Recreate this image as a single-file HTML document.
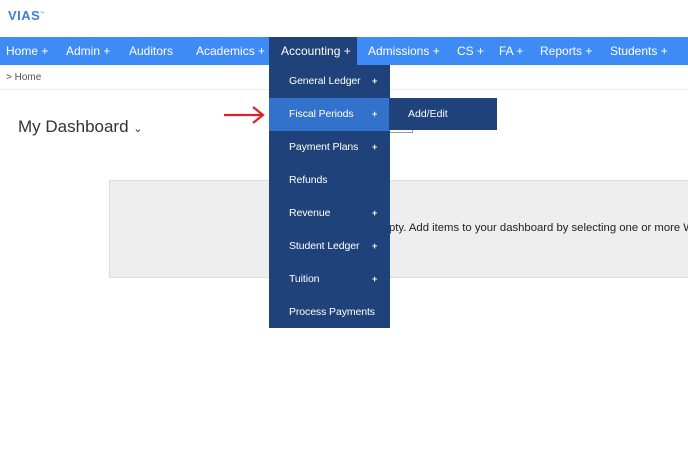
<!DOCTYPE html>
<html><head><style>
*{margin:0;padding:0;box-sizing:border-box}
body{width:688px;height:453px;overflow:hidden;background:#fff;font-family:"Liberation Sans",sans-serif;position:relative}
.a{position:absolute;white-space:nowrap}
.nav{position:absolute;left:0;top:37px;width:688px;height:28px;background:#3f8bf6}
.nav span{position:absolute;top:7px;color:#fff;font-size:12px}
.dd{position:absolute;left:269px;top:65px;width:121px;height:263px;background:#1e4279}
.dd div{position:absolute;left:0;width:121px;height:33px;color:#fff;font-size:10.5px;padding:10px 0 0 20px;letter-spacing:-0.1px}
.dd b{position:absolute;left:103px;top:11px;font-weight:bold;font-size:9px}
</style></head><body>
<div class="a" style="left:8px;top:8px;color:#3d7fe0;font-weight:bold;font-size:13px;letter-spacing:0.5px">VIAS<sup style="font-size:4px">™</sup></div>
<div class="nav">
<span style="left:6px">Home +</span>
<span style="left:66px">Admin +</span>
<span style="left:129px">Auditors</span>
<span style="left:196px">Academics +</span>
<div style="position:absolute;left:269px;top:0;width:88px;height:28px;background:#1e4279"></div>
<span style="left:281px">Accounting +</span>
<span style="left:368px">Admissions +</span>
<span style="left:457px">CS +</span>
<span style="left:499px">FA +</span>
<span style="left:540px">Reports +</span>
<span style="left:610px">Students +</span>
</div>
<div class="a" style="left:6px;top:72px;font-size:10px;color:#555">&gt; Home</div>
<div class="a" style="left:0;top:89px;width:688px;height:1px;background:#eee"></div>
<div class="a" style="left:18px;top:117px;font-size:17px;color:#333">My Dashboard <span style="font-size:11px">&#8964;</span></div>
<div class="a" style="left:380px;top:124px;width:33px;height:9px;border:1px solid #999;border-top:none"></div>
<div class="a" style="left:109px;top:180px;width:590px;height:98px;background:#eee;border:1px solid #ddd"></div>
<div class="a" style="left:389px;top:222px;font-size:11.3px;color:#222">pty. Add items to your dashboard by selecting one or more W</div>
<div class="dd">
<div style="top:0">General Ledger<b>+</b></div>
<div style="top:33px;background:#3272cc">Fiscal Periods<b>+</b></div>
<div style="top:66px">Payment Plans<b>+</b></div>
<div style="top:99px">Refunds</div>
<div style="top:132px">Revenue<b>+</b></div>
<div style="top:165px">Student Ledger<b>+</b></div>
<div style="top:198px">Tuition<b>+</b></div>
<div style="top:231px">Process Payments</div>
</div>
<div class="a" style="left:389px;top:98px;width:108px;height:32px;background:#1e4279;color:#fff;font-size:10.5px;padding:10px 0 0 19px">Add/Edit</div>
<svg class="a" style="left:222px;top:104px" width="44" height="22"><path d="M2 11H40M31 3L41 11L31 19" stroke="#e0202a" stroke-width="2.2" fill="none"/></svg>
</body></html>
